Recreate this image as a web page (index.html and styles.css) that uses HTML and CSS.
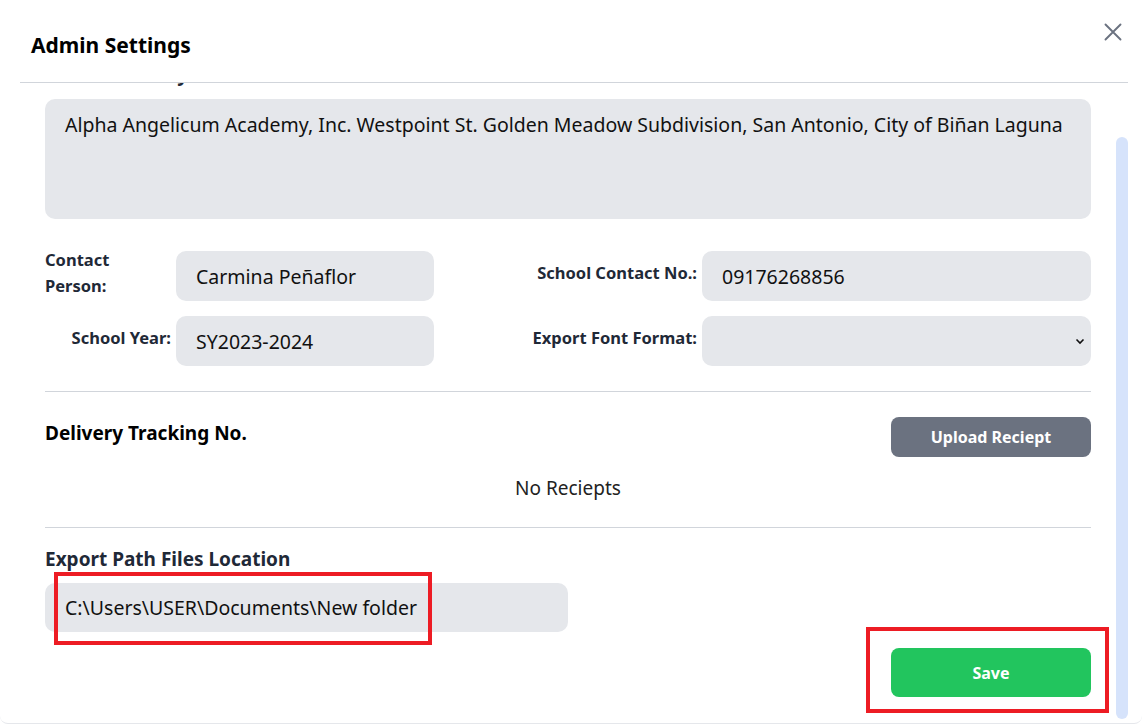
FILE: index.html
```html
<!DOCTYPE html>
<html lang="en">
<head>
  <meta charset="UTF-8">
  <meta name="viewport" content="width=device-width, initial-scale=1.0">
  <title>Admin Settings</title>
  <link rel="stylesheet" href="styles.css">
</head>
<body>
  <div class="modal">
    <div class="modal-header">
      <h2>Admin Settings</h2>
      <button class="close-btn" type="button" aria-label="Close">
        <svg width="18" height="18" viewBox="0 0 18 18">
          <path d="M1.5 1.5 L16.5 16.5 M16.5 1.5 L1.5 16.5" stroke="#6b7280" stroke-width="1.9" stroke-linecap="round" fill="none"/>
        </svg>
      </button>
    </div>

    <div class="body-wrap">
      <div class="modal-body" id="modalBody">
        <div class="field">
          <label class="field-title" for="address">School Identity</label>
          <textarea id="address" class="input address" readonly>Alpha Angelicum Academy, Inc. Westpoint St. Golden Meadow Subdivision, San Antonio, City of Biñan Laguna</textarea>
        </div>

        <div class="info-grid">
          <label class="grid-label contact-label" for="contact">Contact Person:</label>
          <input id="contact" class="input" type="text" value="Carmina Peñaflor">
          <label class="grid-label right" for="phone">School Contact No.:</label>
          <input id="phone" class="input" type="text" value="09176268856">

          <label class="grid-label right" for="year">School Year:</label>
          <input id="year" class="input" type="text" value="SY2023-2024">
          <label class="grid-label right" for="font">Export Font Format:</label>
          <div class="select-wrap">
            <select id="font" class="input select">
              <option></option>
            </select>
            <svg class="chevron" width="10" height="10" viewBox="0 0 10 10">
              <path d="M1.5 3.5 L5 7 L8.5 3.5" stroke="#111" stroke-width="1.6" fill="none"/>
            </svg>
          </div>
        </div>

        <hr class="divider first">

        <div class="delivery-head">
          <h3>Delivery Tracking No.</h3>
          <button class="upload-btn" type="button">Upload Reciept</button>
        </div>
        <p class="empty">No Reciepts</p>

        <hr class="divider">

        <h3 class="export-title">Export Path Files Location</h3>
        <div class="path-wrap">
          <input class="input path" type="text" value="C:\Users\USER\Documents\New folder">
          <div class="mark mark-path"></div>
        </div>

        <div class="actions">
          <div class="save-wrap">
            <button class="save-btn" type="button">Save</button>
            <div class="mark mark-save"></div>
          </div>
        </div>
      </div>
      <div class="scroll-thumb"></div>
    </div>
  </div>
  <script src="script.js"></script>
</body>
</html>
```

FILE: styles.css
```css
body {
  margin: 0;
  padding: 0;
  background: #fff;
  font-family: "Noto Sans", "Open Sans", sans-serif;
  color: #111827;
  overflow: hidden;
}
.modal {
  width: 100%;
  height: 723px;
  background: #fff;
  border-bottom: 1px solid #e5e7eb;
  border-radius: 0 0 8px 8px;
}
.modal-header {
  height: 82px;
  margin: 0 14px 0 20px;
  border-bottom: 1px solid #d1d5db;
  display: flex;
  justify-content: space-between;
  align-items: flex-start;
}
.modal-header h2 {
  margin: 30px 0 0 11px;
  font-size: 21px;
  font-weight: 700;
  color: #000;
  line-height: 30px;
}
.close-btn {
  margin: 23px 6px 0 0;
  background: none;
  border: none;
  padding: 0;
  cursor: pointer;
}
.body-wrap {
  position: relative;
  margin: 0 14px 0 20px;
}
.modal-body {
  height: 639px;
  padding: 38px 37px 25px 25px;
  box-sizing: border-box;
  overflow: hidden;
}
.scroll-thumb {
  position: absolute;
  right: 0;
  top: 54px;
  width: 12px;
  height: 582px;
  background: #d6e3fb;
  border-radius: 6px;
}
.field-title {
  display: block;
  font-size: 19px;
  font-weight: 700;
  line-height: 28px;
  margin-bottom: 11px;
  color: #1f2937;
}
.input {
  display: block;
  width: 100%;
  box-sizing: border-box;
  border: none;
  outline: none;
  background: #e5e7eb;
  border-radius: 10px;
  font-family: inherit;
  font-size: 19.5px;
  color: #111;
  padding: 0 20px;
  height: 50px;
}
.address {
  height: 120px;
  padding: 12px 20px;
  resize: none;
  line-height: 28px;
}
.info-grid {
  margin-top: 32px;
  display: grid;
  grid-template-columns: 126px 258px 258px 389px;
  grid-auto-rows: 50px;
  column-gap: 5px;
  row-gap: 15px;
  align-items: center;
}
.grid-label {
  font-size: 16.5px;
  font-weight: 700;
  color: #1f2937;
  line-height: 26px;
  padding-bottom: 6px;
}
.grid-label.right {
  text-align: right;
  white-space: nowrap;
}
.contact-label {
  width: 80px;
}
.select-wrap {
  position: relative;
}
.select {
  appearance: none;
  -webkit-appearance: none;
}
.chevron {
  position: absolute;
  right: 6px;
  top: 20px;
}
.divider {
  border: none;
  border-top: 1px solid #d1d5db;
  margin: 25px 0 0 0;
}
.delivery-head {
  margin-top: 25px;
  display: flex;
  justify-content: space-between;
  align-items: center;
}
.delivery-head h3,
.export-title {
  margin: 0;
  font-size: 19px;
  font-weight: 700;
  line-height: 24px;
}
.delivery-head h3 {
  margin-top: -8px;
  color: #000;
}
.upload-btn {
  width: 200px;
  height: 40px;
  background: #6b7280;
  color: #fff;
  border: none;
  border-radius: 8px;
  font-family: inherit;
  font-size: 16px;
  font-weight: 700;
  cursor: pointer;
}
.empty {
  margin: 19px 0 0 0;
  text-align: center;
  font-size: 19px;
  line-height: 24px;
  color: #222;
}
.empty + .divider {
  margin-top: 27px;
}
.export-title {
  margin-top: 19px;
  color: #1f2937;
}
.path-wrap {
  position: relative;
  width: 523px;
  margin-top: 12px;
}
.path {
  height: 49px;
}
.actions {
  margin-top: 16px;
  display: flex;
  justify-content: flex-end;
}
.save-wrap {
  position: relative;
}
.save-btn {
  display: block;
  width: 200px;
  height: 49px;
  background: #22c55e;
  color: #fff;
  border: none;
  border-radius: 8px;
  font-family: inherit;
  font-size: 16px;
  font-weight: 700;
  cursor: pointer;
}
.mark {
  position: absolute;
  border: 4px solid #ed1c24;
  box-sizing: border-box;
  pointer-events: none;
}
.mark-path {
  left: 9px;
  top: -11px;
  width: 378px;
  height: 73px;
}
.mark-save {
  left: -25px;
  top: -21px;
  width: 243px;
  height: 86px;
}
```

FILE: script.js
```js
const modalBody = document.getElementById("modalBody");
modalBody.scrollTop = modalBody.scrollHeight;
```
